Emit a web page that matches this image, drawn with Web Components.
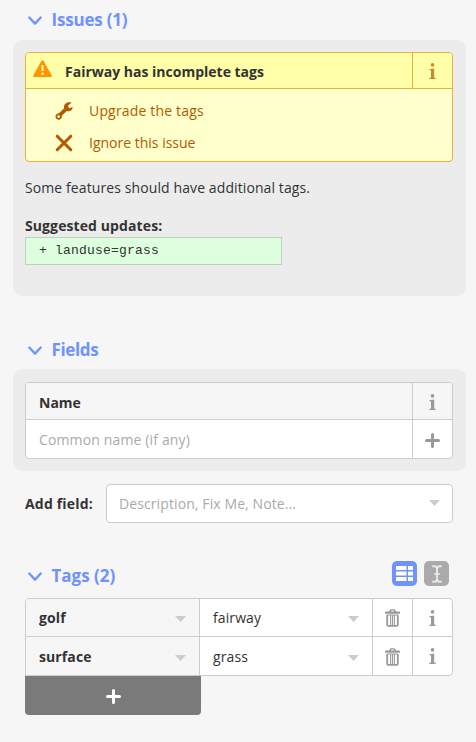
<!DOCTYPE html>
<html lang="en">
<head>
<meta charset="utf-8">
<title>Feature editor</title>
<style>
html,body{margin:0;padding:0}
body{width:476px;height:742px;overflow:hidden;background:#f6f6f6;color:#333;font:14px/20px "Open Sans","Noto Sans",sans-serif}
</style>
</head>
<body>
<feature-sidebar></feature-sidebar>
<script>
const define = (name, css, html) => customElements.define(name, class extends HTMLElement {
  constructor() {
    super();
    this.attachShadow({mode: 'open'}).innerHTML = `<style>*{box-sizing:border-box}:host{box-sizing:border-box}${css}</style>${html}`;
  }
});

const icons = {
  chevron: [14, 10, '<path d="M1.300 1.500 7 7.600l5.700-6.100" fill="none" stroke="currentColor" stroke-width="2.300" stroke-linecap="round" stroke-linejoin="round"/>'],
  info: [7, 17, '<circle cx="3.500" cy="1.900" r="1.800"/><path d="M.4 6.200 5.200 5.500V14.600l1.500.5V16H.3v-.9l1.700-.5V7.400L.4 7z"/>'],
  plus: [15, 15, '<path d="M7.500 1.500v12M1.500 7.500h12" stroke="currentColor" stroke-width="3" stroke-linecap="round"/>'],
  alert: [19, 17, '<path d="M8.500.8Q9.500-.5 10.500.8L18.700 15.300Q19 16.700 17.700 17H1.300Q0 16.700.3 15.300z"/><path d="M9.500 5v6" stroke="#ffa" stroke-width="2"/><circle cx="9.500" cy="13.800" r="1.300" fill="#ffa"/>'],
  wrench: [18, 18, '<path fill-rule="evenodd" d="M16.600.7 13.300 3.200v2l1.600 1.100 2.600-1.600c.6 3.100-2.600 5.600-5.700 4.300L6.800 13.700A3.200 3.200 0 1 1 3.900 11.300L9.200 6.200C8 2.500 12.200-1 16.600.7zM3.600 13.200a1.350 1.350 0 1 0 0 2.700 1.350 1.350 0 0 0 0-2.700z"/>'],
  cross: [18, 18, '<path d="m2.200 2.200 13.600 13.600m0-13.600L2.200 15.800" stroke="currentColor" stroke-width="3" stroke-linecap="round"/>'],
  trash: [15, 18, '<path fill-rule="evenodd" d="M4 2.600 4.900.7Q5.200.2 5.800.2h3.400q.6 0 .9.500l.9 1.900h3.200q.8 0 .8.800v1.400H0V3.400q0-.8.800-.8zm1.900 0h3.200L8.600 1.600H6.400z"/><path d="M2.200 6v9.700q0 1.100 1.100 1.100h8.400q1.100 0 1.100-1.100V6" fill="none" stroke="currentColor" stroke-width="1.800"/><path d="M2 6h11M5.600 6v10.500M7.500 6v10.500M9.400 6v10.500" fill="none" stroke="currentColor" stroke-width="1.100"/>'],
  caret: [11, 6, '<path d="M0 0h11L5.500 6z"/>'],
  grid: [17, 17, '<path d="M0 1h10.500v4H0zM12 1h5v4h-5zM0 6.500h10.500v4H0zM12 6.500h5v4h-5zM0 12h10.500v4H0zM12 12h5v4h-5z"/>'],
  cursor: [10, 18, '<path d="M1 1.200h1.500Q5 1.300 5 4v10q0 2.700-2.500 2.800H1M9 1.200H7.500Q5 1.300 5 4v10q0 2.700 2.500 2.800H9M3 9h4" fill="none" stroke="currentColor" stroke-width="1.900" stroke-linecap="round"/>']
};
customElements.define('ui-icon', class extends HTMLElement {
  connectedCallback() {
    const [w, h, art] = icons[this.getAttribute('name')];
    if (!this.shadowRoot) this.attachShadow({mode: 'open'});
    this.shadowRoot.innerHTML = `<style>:host{display:block;flex:none;width:${w}px;height:${h}px}svg{display:block}</style><svg width="${w}" height="${h}" viewBox="0 0 ${w} ${h}" fill="currentColor" aria-hidden="true">${art}</svg>`;
  }
});

define('section-heading',
  `:host{display:flex;align-items:center;height:24px;padding:0 27px 0 28px;color:#7092ff;font-size:17px;font-weight:700}
   h3{margin:0 auto 0 9.500px;font:inherit;line-height:24px;white-space:nowrap;letter-spacing:var(--track,0)}
   ui-icon{margin-top:2px}`,
  `<ui-icon name="chevron"></ui-icon><h3><slot></slot></h3><slot name="tools"></slot>`);

define('shaded-panel',
  `:host{display:block;margin:0 10px 0 13px;padding:12px 13px 0 12px;border-radius:9px;background:#ececec}`,
  `<slot></slot>`);

define('issue-card',
  `:host{display:block;height:110px;border:1px solid #e6b23a;border-radius:4px;background:#ffc;overflow:hidden}
   .head{display:grid;grid-template-columns:1fr 40px;height:36px;border-bottom:1px solid #e6b23a;background:#ffa}
   .title{display:flex;align-items:center;padding:2px 0 0 7px;font-weight:700;white-space:nowrap;gap:13px}
   .title ui-icon{color:#ff9500;margin-top:-6px}
   .info{display:grid;place-items:center;padding-top:1px;border-left:1px solid #e6b23a;color:#c58c33}
   .fixes{padding:6px 0 0 29px;color:#b35a00}
   .fix{display:flex;align-items:center;height:32px;gap:16px;white-space:nowrap}
   .fix:first-child span{letter-spacing:.17px}`,
  `<div class="head"><div class="title"><ui-icon name="alert"></ui-icon><span>Fairway has incomplete tags</span></div><div class="info"><ui-icon name="info"></ui-icon></div></div>
   <div class="fixes"><div class="fix"><ui-icon name="wrench"></ui-icon><span>Upgrade the tags</span></div><div class="fix"><ui-icon name="cross"></ui-icon><span>Ignore this issue</span></div></div>`);

define('issue-details',
  `:host{display:block;white-space:nowrap}
   p{margin:16px 0 0;letter-spacing:.1px} b{display:block;margin-top:18px;letter-spacing:.1px}
   code{display:block;width:257px;height:28px;margin-top:1px;padding:0 13px;border:1px solid #bfcfbf;background:#dfd;font:13px/25px "Liberation Mono",monospace;letter-spacing:.2px}`,
  `<p>Some features should have additional tags.</p><b>Suggested updates:</b><code>+ landuse=grass</code>`);

define('text-field',
  `:host{display:grid;grid-template:37px 38px/1fr 40px;height:77px;border:1px solid #ccc;border-radius:4px;background:#fff;overflow:hidden}
   div{display:flex;align-items:center;white-space:nowrap}
   .k,.i{background:#f6f6f6;border-bottom:1px solid #ccc} .k,.v{padding:2px 0 0 13px}
   .k{padding-top:4px;font-weight:700} .v{color:#aaa;letter-spacing:.14px}
   .i,.p{justify-content:center;border-left:1px solid #ccc;color:#999}.i{padding-top:2px}.p{padding:2px 1px 0 0}`,
  `<div class="k"><slot></slot></div><div class="i"><ui-icon name="info"></ui-icon></div><div class="v"><slot name="placeholder"></slot></div><div class="p"><ui-icon name="plus"></ui-icon></div>`);

define('add-field',
  `:host{display:flex;align-items:center;height:39px;margin:0 23px 0 25px;white-space:nowrap}
   b{width:81px;letter-spacing:.18px}
   div{flex:1;display:flex;align-items:center;justify-content:space-between;height:39px;padding:0 12px;border:1px solid #ccc;border-radius:4px;background:#fff;color:#aaa}
   span{letter-spacing:.1px} ui-icon{color:#ccc;margin-top:-1px}`,
  `<b>Add field:</b><div><span>Description, Fix Me, Note...</span><ui-icon name="caret"></ui-icon></div>`);

define('view-toggle',
  `:host{display:flex;gap:7px;margin-top:-5px;color:#fff}
   div{display:grid;place-items:center;width:25px;height:25px;border-radius:5px;background:#7092ff}
   div+div{background:#aaa;color:#e8e8e8}`,
  `<div><ui-icon name="grid"></ui-icon></div><div><ui-icon name="cursor"></ui-icon></div>`);

define('tag-row',
  `:host{display:grid;grid-template-columns:173px 173px 40px 40px;height:38px}
   div{display:flex;align-items:center;border-left:1px solid #ccc}
   .k,.v{justify-content:space-between;padding:var(--drop,0) 13px 0 13px}
   .k{border:0;background:#f6f6f6;font-weight:700;letter-spacing:.1px} .v{letter-spacing:.1px}
   .k ui-icon,.v ui-icon{color:#ccc;margin-top:var(--caret,3px)}.t,.i{justify-content:center;color:#999;padding-top:1px}`,
  `<div class="k"><slot name="key"></slot><ui-icon name="caret"></ui-icon></div><div class="v"><slot name="value"></slot><ui-icon name="caret"></ui-icon></div><div class="t"><ui-icon name="trash"></ui-icon></div><div class="i"><ui-icon name="info"></ui-icon></div>`);

define('tag-table',
  `:host{display:block;margin:0 23px 0 25px}
   .rows{border:1px solid #ccc;border-radius:4px 4px 4px 0;overflow:hidden;background:#fff}
   ::slotted(tag-row:first-child){border-bottom:1px solid #ccc}
   ::slotted(tag-row:last-child){--drop:2px;--caret:1px}
   .add{display:grid;place-items:center;width:176px;height:39px;padding:2px 0 0 1px;border-radius:0 0 4px 4px;background:#7a7a7a;color:#fff}`,
  `<div class="rows"><slot></slot></div><div class="add"><ui-icon name="plus"></ui-icon></div>`);

define('feature-sidebar',
  `:host{display:block;width:476px;padding-top:8px}
   .i{--track:-.2px} shaded-panel.a{height:256px;margin-top:8px}
   .b{--track:-.35px;margin-top:42px} shaded-panel.c{height:102px;margin-top:7px;padding-top:13px}
   add-field{margin-top:13px}.d{margin-top:41px}tag-table{margin-top:10px}`,
  `<section-heading class="i">Issues (1)</section-heading>
   <shaded-panel class="a"><issue-card></issue-card><issue-details></issue-details></shaded-panel>
   <section-heading class="b">Fields</section-heading>
   <shaded-panel class="c"><text-field>Name<span slot="placeholder">Common name (if any)</span></text-field></shaded-panel>
   <add-field></add-field>
   <section-heading class="d">Tags (2)<view-toggle slot="tools"></view-toggle></section-heading>
   <tag-table>
     <tag-row><span slot="key">golf</span><span slot="value">fairway</span></tag-row>
     <tag-row><span slot="key">surface</span><span slot="value">grass</span></tag-row>
   </tag-table>`);
</script>
</body>
</html>
